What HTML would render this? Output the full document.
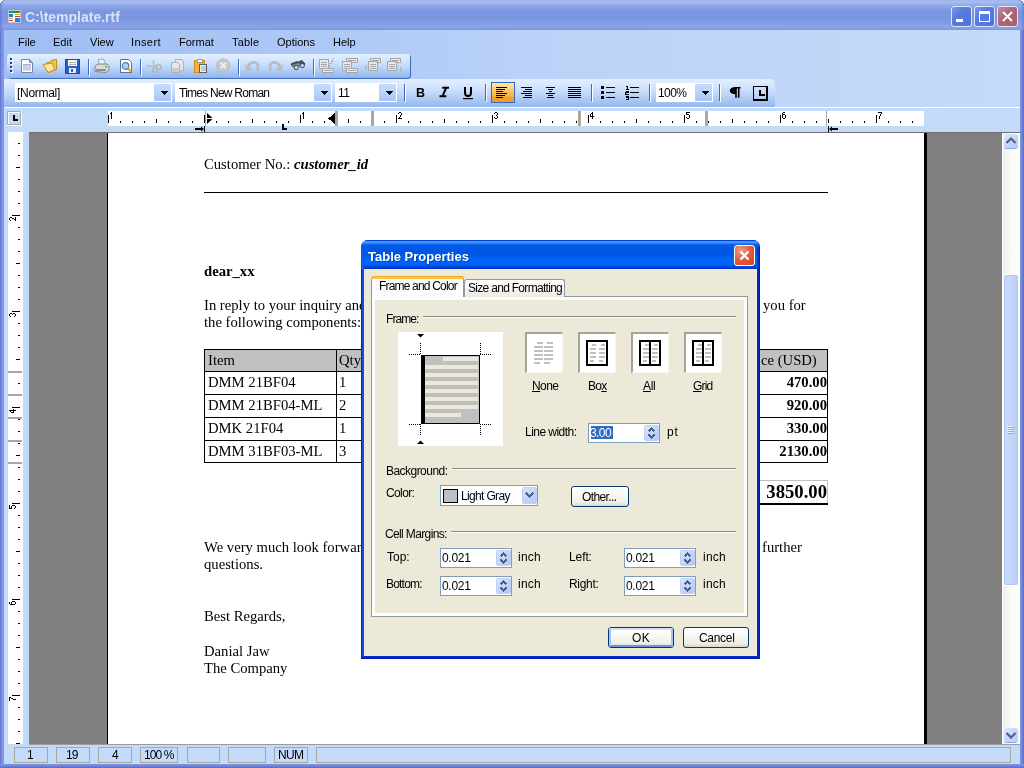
<!DOCTYPE html>
<html><head><meta charset="utf-8">
<style>
*{box-sizing:border-box}
html,body{margin:0;padding:0}
body{width:1024px;height:768px;overflow:hidden;position:relative;font-family:"Liberation Sans",sans-serif;font-size:11px;color:#000;background:#7a8fdd}
.a{position:absolute}
.t{position:absolute;white-space:nowrap;will-change:transform}
svg{position:absolute;overflow:visible}
</style></head><body>
<div class="a" style="left:0px;top:0px;width:1024px;height:768px;background:linear-gradient(90deg,#5a68cc 0,#7389dc 1px,#8298e2 3px,#8298e2 1020px,#6f84da 1022px,#5a68cc 1024px)"></div>
<div class="a" style="left:0px;top:764px;width:1024px;height:4px;background:linear-gradient(180deg,#8298e2,#6f84da 2px,#5a68cc)"></div>
<div class="a" style="left:0px;top:0px;width:1024px;height:30px;border-radius:8px 8px 0 0;background:linear-gradient(180deg,#9fb3ec 0,#a9bdf0 2px,#93abea 5px,#7c97e0 11px,#7a96df 19px,#86a1e6 25px,#8aa4e7 27px,#7d94de 30px)"></div>
<div class="a" style="left:0px;top:0px;width:1024px;height:30px;border-radius:8px 8px 0 0;background:linear-gradient(90deg,#6b7ed8 0,rgba(0,0,0,0) 3px,rgba(0,0,0,0) 1021px,#6b7ed8 1024px)"></div>
<div class="a" style="left:0px;top:0px;width:3px;height:1px;background:#fff"></div>
<div class="a" style="left:0px;top:1px;width:1px;height:2px;background:#fff"></div>
<div class="a" style="left:1021px;top:0px;width:3px;height:1px;background:#fff"></div>
<div class="a" style="left:1023px;top:1px;width:1px;height:2px;background:#fff"></div>
<svg style="left:8px;top:10px" width="13" height="13" viewBox="0 0 13 13" shape-rendering="crispEdges">
<rect x="0" y="0" width="13" height="13" rx="1" fill="#fff"/>
<rect x="0.5" y="0.5" width="12" height="12" rx="1" fill="none" stroke="#b8c4e4"/>
<rect x="1" y="1" width="11" height="2" fill="#1ea01e"/>
<rect x="1" y="4" width="4" height="3" fill="#1e80e8"/>
<rect x="7" y="4" width="5" height="1" fill="#f0a818"/>
<rect x="7" y="6" width="5" height="1" fill="#e03c14"/>
<rect x="1" y="8" width="4" height="1" fill="#f4b820"/>
<rect x="1" y="10" width="4" height="1" fill="#e03c14"/>
<rect x="7" y="8" width="5" height="4" fill="#1e80e8"/>
</svg>
<div class="t " style="left:25.00px;top:8.15px;font-size:14px;line-height:18px;font-family:'Liberation Sans',sans-serif;font-weight:bold;color:#d8e2f8;letter-spacing:0">C:\template.rtf</div>
<div class="a" style="left:951px;top:6px;width:21px;height:21px;border:1px solid #dfe6f8;border-radius:3px;background:linear-gradient(135deg,#7d98ea 0,#5a7de0 35%,#4f71dc 100%)"></div>
<div class="a" style="left:974px;top:6px;width:21px;height:21px;border:1px solid #dfe6f8;border-radius:3px;background:linear-gradient(135deg,#7d98ea 0,#5a7de0 35%,#4f71dc 100%)"></div>
<div class="a" style="left:997px;top:6px;width:21px;height:21px;border:1px solid #dfe6f8;border-radius:3px;background:linear-gradient(135deg,#c48a9a 0,#b06878 40%,#a85a6c 100%)"></div>
<div class="a" style="left:956px;top:19px;width:7px;height:3px;background:#fff"></div>
<div class="a" style="left:979px;top:11px;width:11px;height:11px;border:1px solid #fff;border-top-width:3px"></div>
<svg style="left:1002px;top:11px" width="11" height="11" viewBox="0 0 11 11"><path d="M1 1L10 10M10 1L1 10" stroke="#fff" stroke-width="2"/></svg>
<div class="a" style="left:4px;top:30px;width:1016px;height:734px;background:#c4daf9"></div>
<div class="a" style="left:4px;top:30px;width:1016px;height:78px;background:linear-gradient(90deg,#a0bdf4 0,#aac6f6 25%,#bcd3f8 55%,#c4daf9 100%)"></div>
<div class="t " style="left:18.00px;top:34.69px;font-size:11px;line-height:14px;font-family:'Liberation Sans',sans-serif;letter-spacing:-0.3px;letter-spacing:0px">File</div>
<div class="t " style="left:53.00px;top:34.69px;font-size:11px;line-height:14px;font-family:'Liberation Sans',sans-serif;letter-spacing:-0.3px;letter-spacing:0px">Edit</div>
<div class="t " style="left:90.00px;top:34.69px;font-size:11px;line-height:14px;font-family:'Liberation Sans',sans-serif;letter-spacing:-0.3px;letter-spacing:0px">View</div>
<div class="t " style="left:131.00px;top:34.69px;font-size:11px;line-height:14px;font-family:'Liberation Sans',sans-serif;letter-spacing:-0.3px;letter-spacing:0.4px">Insert</div>
<div class="t " style="left:179.00px;top:34.69px;font-size:11px;line-height:14px;font-family:'Liberation Sans',sans-serif;letter-spacing:-0.3px;letter-spacing:0px">Format</div>
<div class="t " style="left:232.00px;top:34.69px;font-size:11px;line-height:14px;font-family:'Liberation Sans',sans-serif;letter-spacing:-0.3px;letter-spacing:0.2px">Table</div>
<div class="t " style="left:277.00px;top:34.69px;font-size:11px;line-height:14px;font-family:'Liberation Sans',sans-serif;letter-spacing:-0.3px;letter-spacing:0px">Options</div>
<div class="t " style="left:333.00px;top:34.69px;font-size:11px;line-height:14px;font-family:'Liberation Sans',sans-serif;letter-spacing:-0.3px;letter-spacing:0px">Help</div>
<div class="a" style="left:7px;top:54px;width:403px;height:24px;border-radius:3px 3px 4px 4px;background:linear-gradient(180deg,#e3efff 0,#d2e5fd 30%,#b9d4f9 60%,#90b2ea 100%);box-shadow:1px 1px 0 #3f6cb8"></div>
<div class="a" style="left:4px;top:79px;width:771px;height:28px;border-radius:0 5px 5px 0;background:linear-gradient(180deg,#e3efff 0,#d5e6fd 25%,#bdd6f9 55%,#94b6eb 100%);box-shadow:0 1px 0 #6591d2"></div>
<div class="a" style="left:4px;top:107px;width:1016px;height:1px;background:#fff"></div>
<div class="a" style="left:4px;top:132px;width:998px;height:612px;background:#808080"></div>
<div class="a" style="left:4px;top:132px;width:25px;height:612px;background:#c4daf9"></div>
<div class="a" style="left:8px;top:132px;width:15px;height:612px;background:#fff"></div>
<div class="a" style="left:107px;top:133px;width:820px;height:611px;background:#fff;border-left:1px solid #000;border-right:3px solid #000"></div>
<div class="a" style="left:1002px;top:132px;width:18px;height:612px;background:linear-gradient(90deg,#f0f0ea,#fbfbf7 50%,#fdfdfa);border-left:1px solid #fff;border-top:1px solid #fff"></div>
<div class="a" style="left:29px;top:132px;width:991px;height:1px;background:#707070"></div>
<div class="a" style="left:29px;top:744px;width:991px;height:1px;background:#9c9c9c"></div>
<div class="a" style="left:4px;top:745px;width:1016px;height:19px;background:#c4daf9"></div>
<div class="a" style="left:11px;top:59px;width:2px;height:2px;background:#fff"></div>
<div class="a" style="left:10px;top:58px;width:2px;height:2px;background:#1c3c78"></div>
<div class="a" style="left:11px;top:63px;width:2px;height:2px;background:#fff"></div>
<div class="a" style="left:10px;top:62px;width:2px;height:2px;background:#1c3c78"></div>
<div class="a" style="left:11px;top:67px;width:2px;height:2px;background:#fff"></div>
<div class="a" style="left:10px;top:66px;width:2px;height:2px;background:#1c3c78"></div>
<div class="a" style="left:11px;top:71px;width:2px;height:2px;background:#fff"></div>
<div class="a" style="left:10px;top:70px;width:2px;height:2px;background:#1c3c78"></div>
<svg style="left:20px;top:58px" width="14" height="16" viewBox="0 0 14 16"><path d="M1.5 1.5H9.5L12.5 4.5V14.5H1.5Z" fill="#fff" stroke="#7486aa"/><path d="M9.5 1.5V4.5H12.5Z" fill="#c8d0e4" stroke="#7486aa" stroke-linejoin="round"/><rect x="3" y="6" width="8" height="1" fill="#a8b0d4"/><rect x="3" y="7" width="8" height="5.5" fill="#c8cce4"/></svg>
<svg style="left:42px;top:58px" width="16" height="16" viewBox="0 0 16 16"><path d="M4.5 5 L8 4 L9 2.5 L14.5 1.5 V11.5 L6 14.5 Z" fill="#f2c650" stroke="#c88c10" stroke-linejoin="round"/><path d="M1 6.5 L10.5 5 L12.5 12 L6 14.5 Z" fill="#fde69a" stroke="#c88c10" stroke-linejoin="round"/></svg>
<svg style="left:65px;top:58px" width="15" height="16" viewBox="0 0 15 16" shape-rendering="crispEdges"><rect x="0.5" y="1.5" width="14" height="14" fill="#2a5fc8" stroke="#1b4aa8"/><rect x="3" y="2" width="9" height="6" fill="#f4f4ee"/><rect x="4" y="3.5" width="7" height="1" fill="#b0b0b0"/><rect x="4" y="5.5" width="7" height="1" fill="#b0b0b0"/><rect x="4" y="10" width="7" height="5" fill="#e8ecf4"/><rect x="6" y="11" width="2" height="3" fill="#2a5fc8"/></svg>
<div class="a" style="left:88px;top:59px;width:1px;height:16px;background:#3d68c4"></div>
<div class="a" style="left:89px;top:60px;width:1px;height:16px;background:#fff"></div>
<svg style="left:94px;top:58px" width="16" height="16" viewBox="0 0 16 16"><path d="M4 1.5 L9.5 1 L11.5 6 L5.5 7 Z" fill="#e4f0fb" stroke="#8aa0b8" stroke-width="0.8"/><path d="M1 8 L4 6 L13 6 L15 8 L15 12 L12 14.5 L1 13.5 Z" fill="#d8dadc" stroke="#7d7f82" stroke-width="0.9"/><rect x="2" y="11" width="10" height="2" fill="#8c8e90"/><rect x="11.5" y="8" width="1.5" height="1.5" fill="#20b020"/></svg>
<svg style="left:119px;top:58px" width="14" height="16" viewBox="0 0 14 16"><path d="M1.5 1.5H9.5L12.5 4.5V14.5H1.5Z" fill="#fff" stroke="#586ea8"/><circle cx="6.5" cy="8" r="3.3" fill="#a8d8f8" stroke="#5878a0" stroke-width="1.2"/><path d="M9 10.5 L12 13.5" stroke="#f29a20" stroke-width="2.2"/></svg>
<div class="a" style="left:140px;top:59px;width:1px;height:16px;background:#3d68c4"></div>
<div class="a" style="left:141px;top:60px;width:1px;height:16px;background:#fff"></div>
<svg style="left:146px;top:58px" width="16" height="16" viewBox="0 0 16 16"><path d="M1 7.5 L8.5 8.8" stroke="#b8bcc0" stroke-width="1.6"/><path d="M7 2 L8.6 9" stroke="#b8bcc0" stroke-width="1.6"/><circle cx="9" cy="12" r="2.4" fill="none" stroke="#b0b4b8" stroke-width="1.4"/><circle cx="12.5" cy="9" r="2.4" fill="none" stroke="#b0b4b8" stroke-width="1.4"/></svg>
<svg style="left:170px;top:58px" width="15" height="16" viewBox="0 0 15 16" shape-rendering="crispEdges"><path d="M5.5 1.5H11.5L13.5 3.5V12.5H5.5Z" fill="#e4e6e8" stroke="#b0b2b4"/><path d="M1.5 4.5H7.5L9.5 6.5V14.5H1.5Z" fill="#e4e6e8" stroke="#b0b2b4"/><rect x="2" y="10" width="7" height="4" fill="#c8cacc"/></svg>
<svg style="left:193px;top:58px" width="15" height="16" viewBox="0 0 15 16" shape-rendering="crispEdges"><rect x="1.5" y="2.5" width="10" height="12" rx="1" fill="#f4b040" stroke="#d08a18"/><rect x="4" y="1" width="5" height="3" fill="#fff" stroke="#8a8a8a" stroke-width="0.8"/><rect x="6.5" y="6.5" width="7" height="8" fill="#eef0f8" stroke="#606060"/><rect x="7.5" y="8" width="5" height="5" fill="#c0c8e8"/></svg>
<svg style="left:216px;top:58px" width="15" height="15" viewBox="0 0 15 15"><circle cx="7.2" cy="7.5" r="6.6" fill="#c6c8ca" stroke="#b8babc"/><path d="M4.5 4.8 L10 10.2 M10 4.8 L4.5 10.2" stroke="#eceeef" stroke-width="2"/></svg>
<div class="a" style="left:238px;top:59px;width:1px;height:16px;background:#3d68c4"></div>
<div class="a" style="left:239px;top:60px;width:1px;height:16px;background:#fff"></div>
<svg style="left:245px;top:59px" width="15" height="13" viewBox="0 0 15 13"><path d="M4 8 C3 3 12 1 13 7 C13 9 12.5 11 12 12" fill="none" stroke="#b8bcc0" stroke-width="2.6"/><path d="M0.5 4.5 L1 12 L7.5 11 Z" fill="#b8bcc0"/></svg>
<svg style="left:268px;top:59px" width="15" height="13" viewBox="0 0 15 13"><path d="M11 8 C12 3 3 1 2 7 C2 9 2.5 11 3 12" fill="none" stroke="#b8bcc0" stroke-width="2.6"/><path d="M14.5 4.5 L14 12 L7.5 11 Z" fill="#b8bcc0"/></svg>
<svg style="left:290px;top:60px" width="16" height="11" viewBox="0 0 16 11"><path d="M1 4 L7 1.5 L9 4.5 L3 7 Z" fill="#55585c" stroke="#333538" stroke-width="0.9"/><path d="M7 2.5 L12 0.5 L15 4 L9 6 Z" fill="#55585c" stroke="#333538" stroke-width="0.9"/><path d="M2 5 L9 3 L10 6 L4 8Z" fill="#8a8c90"/><circle cx="6.3" cy="7.6" r="2.2" fill="#a8d8f8" stroke="#3a3c40" stroke-width="0.9"/><circle cx="12.2" cy="5.6" r="2.2" fill="#a8d8f8" stroke="#3a3c40" stroke-width="0.9"/></svg>
<div class="a" style="left:313px;top:59px;width:1px;height:16px;background:#3d68c4"></div>
<div class="a" style="left:314px;top:60px;width:1px;height:16px;background:#fff"></div>
<svg style="left:319px;top:58px" width="16" height="15" viewBox="0 0 16 15" shape-rendering="crispEdges"><rect x="0.5" y="1.5" width="9" height="9" fill="#e6e8ea" stroke="#a4a6a8"/><rect x="2" y="4" width="6" height="1" fill="#a4a6a8"/><rect x="2" y="6" width="6" height="1" fill="#a4a6a8"/><rect x="2" y="8" width="6" height="1" fill="#a4a6a8"/><rect x="3.5" y="10.5" width="11" height="4" fill="#e6e8ea" stroke="#a4a6a8"/><rect x="5" y="12" width="8" height="1" fill="#a4a6a8"/><path d="M10 9 L15 0" stroke="#a4a6a8" stroke-dasharray="2,1"/></svg>
<svg style="left:342px;top:58px" width="16" height="15" viewBox="0 0 16 15" shape-rendering="crispEdges"><rect x="4.5" y="0.5" width="11" height="4" fill="#e6e8ea" stroke="#a4a6a8"/><rect x="6" y="2" width="8" height="1" fill="#a4a6a8"/><rect x="0.5" y="3.5" width="9" height="9" fill="#e6e8ea" stroke="#a4a6a8"/><rect x="2" y="6" width="6" height="1" fill="#a4a6a8"/><rect x="2" y="8" width="6" height="1" fill="#a4a6a8"/><rect x="2" y="10" width="6" height="1" fill="#a4a6a8"/><rect x="4.5" y="10.5" width="11" height="4" fill="#e6e8ea" stroke="#a4a6a8"/><rect x="6" y="12" width="8" height="1" fill="#a4a6a8"/></svg>
<svg style="left:364px;top:58px" width="17" height="15" viewBox="0 0 17 15" shape-rendering="crispEdges"><rect x="6.5" y="0.5" width="10" height="4" fill="#e6e8ea" stroke="#a4a6a8"/><rect x="8" y="2" width="7" height="1" fill="#a4a6a8"/><rect x="4.5" y="3.5" width="9" height="9" fill="#e6e8ea" stroke="#a4a6a8"/><rect x="6" y="6" width="6" height="1" fill="#a4a6a8"/><rect x="6" y="8" width="6" height="1" fill="#a4a6a8"/><rect x="6" y="10" width="6" height="1" fill="#a4a6a8"/><path d="M3 6 L0.5 9.5 L3 13Z" fill="#b8babc"/></svg>
<svg style="left:387px;top:58px" width="17" height="15" viewBox="0 0 17 15" shape-rendering="crispEdges"><rect x="3.5" y="0.5" width="10" height="4" fill="#e6e8ea" stroke="#a4a6a8"/><rect x="5" y="2" width="7" height="1" fill="#a4a6a8"/><rect x="0.5" y="3.5" width="9" height="9" fill="#e6e8ea" stroke="#a4a6a8"/><rect x="2" y="6" width="6" height="1" fill="#a4a6a8"/><rect x="2" y="8" width="6" height="1" fill="#a4a6a8"/><rect x="2" y="10" width="6" height="1" fill="#a4a6a8"/><path d="M13 8 L15.5 11.5 L13 15Z" fill="#b8babc"/></svg>
<div class="a" style="left:15px;top:83px;width:157px;height:19px;background:#fff;border:1px solid #fff"></div>
<div class="a" style="left:154px;top:84px;width:17px;height:17px;background:linear-gradient(180deg,#c6dcfd 0,#b9d3fb 50%,#a8c6f5 100%)"></div>
<svg style="left:161px;top:91px" width="7" height="4" viewBox="0 0 7 4" shape-rendering="crispEdges"><rect x="0" y="0" width="7" height="1" fill="#000"/><rect x="1" y="1" width="5" height="1" fill="#000"/><rect x="2" y="2" width="3" height="1" fill="#000"/><rect x="3" y="3" width="1" height="1" fill="#000"/></svg>
<div class="t " style="left:17.00px;top:84.84px;font-size:12px;line-height:16px;font-family:'Liberation Sans',sans-serif;letter-spacing:-0.300px;">[Normal]</div>
<div class="a" style="left:175px;top:83px;width:157px;height:19px;background:#fff;border:1px solid #fff"></div>
<div class="a" style="left:314px;top:84px;width:17px;height:17px;background:linear-gradient(180deg,#c6dcfd 0,#b9d3fb 50%,#a8c6f5 100%)"></div>
<svg style="left:321px;top:91px" width="7" height="4" viewBox="0 0 7 4" shape-rendering="crispEdges"><rect x="0" y="0" width="7" height="1" fill="#000"/><rect x="1" y="1" width="5" height="1" fill="#000"/><rect x="2" y="2" width="3" height="1" fill="#000"/><rect x="3" y="3" width="1" height="1" fill="#000"/></svg>
<div class="t " style="left:178.80px;top:84.84px;font-size:12px;line-height:16px;font-family:'Liberation Sans',sans-serif;letter-spacing:-0.757px;">Times New Roman</div>
<div class="a" style="left:335px;top:83px;width:62px;height:19px;background:#fff;border:1px solid #fff"></div>
<div class="a" style="left:379px;top:84px;width:17px;height:17px;background:linear-gradient(180deg,#c6dcfd 0,#b9d3fb 50%,#a8c6f5 100%)"></div>
<svg style="left:386px;top:91px" width="7" height="4" viewBox="0 0 7 4" shape-rendering="crispEdges"><rect x="0" y="0" width="7" height="1" fill="#000"/><rect x="1" y="1" width="5" height="1" fill="#000"/><rect x="2" y="2" width="3" height="1" fill="#000"/><rect x="3" y="3" width="1" height="1" fill="#000"/></svg>
<div class="t " style="left:338.00px;top:84.84px;font-size:12px;line-height:16px;font-family:'Liberation Sans',sans-serif;letter-spacing:-0.6px;">11</div>
<div class="a" style="left:404px;top:84px;width:1px;height:17px;background:#3d68c4"></div>
<div class="a" style="left:405px;top:85px;width:1px;height:17px;background:#fff"></div>
<div class="t " style="left:415.50px;top:84.67px;font-size:12.5px;line-height:16px;font-family:'Liberation Sans',sans-serif;font-weight:bold">B</div>
<svg style="left:439px;top:87px" width="11" height="10" viewBox="0 0 11 10"><path d="M3.2 0.8H10 M0.5 9.2H7.3 M7.2 0.8 L3.5 9.2" stroke="#000" stroke-width="2" fill="none"/></svg>
<svg style="left:463px;top:87px" width="11" height="12" viewBox="0 0 11 12"><path d="M2 0V5.5C2 8.2 3.2 9 5 9C6.8 9 8 8.2 8 5.5V0" fill="none" stroke="#000" stroke-width="2"/><rect x="0" y="11" width="10" height="1.2" fill="#000"/></svg>
<div class="a" style="left:485px;top:84px;width:1px;height:17px;background:#3d68c4"></div>
<div class="a" style="left:486px;top:85px;width:1px;height:17px;background:#fff"></div>
<div class="a" style="left:491px;top:82px;width:24px;height:21px;border:1px solid #3169c6;background:linear-gradient(180deg,#fde7a8 0,#fbd27c 30%,#f7b856 60%,#f09e2e 80%,#ef9b2a 100%)"></div>
<svg style="left:496px;top:87px" width="11" height="12" viewBox="0 0 11 12" shape-rendering="crispEdges"><rect x="0" y="0" width="11" height="1" fill="#000"/><rect x="0" y="2" width="9" height="1" fill="#000"/><rect x="0" y="4" width="7" height="1" fill="#000"/><rect x="0" y="6" width="11" height="1" fill="#000"/><rect x="0" y="8" width="9" height="1" fill="#000"/><rect x="0" y="10" width="7" height="1" fill="#000"/></svg>
<svg style="left:521px;top:87px" width="11" height="12" viewBox="0 0 11 12" shape-rendering="crispEdges"><rect x="0" y="0" width="11" height="1" fill="#000"/><rect x="4" y="2" width="7" height="1" fill="#000"/><rect x="2" y="4" width="9" height="1" fill="#000"/><rect x="0" y="6" width="11" height="1" fill="#000"/><rect x="4" y="8" width="7" height="1" fill="#000"/><rect x="2" y="10" width="9" height="1" fill="#000"/></svg>
<svg style="left:546px;top:87px" width="9" height="12" viewBox="0 0 9 12" shape-rendering="crispEdges"><rect x="0.0" y="0" width="9" height="1" fill="#000"/><rect x="2.0" y="2" width="5" height="1" fill="#000"/><rect x="3.0" y="4" width="3" height="1" fill="#000"/><rect x="0.0" y="6" width="9" height="1" fill="#000"/><rect x="2.0" y="8" width="5" height="1" fill="#000"/><rect x="1.0" y="10" width="7" height="1" fill="#000"/></svg>
<svg style="left:568px;top:87px" width="13" height="12" viewBox="0 0 13 12" shape-rendering="crispEdges"><rect x="0" y="0" width="13" height="1" fill="#000"/><rect x="0" y="2" width="13" height="1" fill="#000"/><rect x="0" y="4" width="13" height="1" fill="#000"/><rect x="0" y="6" width="13" height="1" fill="#000"/><rect x="0" y="8" width="13" height="1" fill="#000"/><rect x="0" y="10" width="13" height="1" fill="#000"/></svg>
<div class="a" style="left:591px;top:84px;width:1px;height:17px;background:#3d68c4"></div>
<div class="a" style="left:592px;top:85px;width:1px;height:17px;background:#fff"></div>
<svg style="left:601px;top:86px" width="14" height="14" viewBox="0 0 14 14" shape-rendering="crispEdges"><rect x="0" y="0" width="3" height="3" fill="#000"/><rect x="5" y="1" width="9" height="1" fill="#000"/><rect x="0" y="5" width="3" height="3" fill="#000"/><rect x="5" y="6" width="9" height="1" fill="#000"/><rect x="0" y="10" width="3" height="3" fill="#000"/><rect x="5" y="11" width="9" height="1" fill="#000"/></svg>
<svg style="left:625px;top:86px" width="14" height="14" viewBox="0 0 14 14" shape-rendering="crispEdges"><rect x="5" y="1" width="9" height="1" fill="#000"/><rect x="5" y="6" width="9" height="1" fill="#000"/><rect x="5" y="11" width="9" height="1" fill="#000"/><path d="M1 0.5H2.5V3H1M1 3H3.5" stroke="#000" fill="none" stroke-width="1"/><path d="M0.5 5H3V6.5H0.5V8H3.5" stroke="#000" fill="none" stroke-width="1"/><path d="M0.5 10H3V11.5H1M3 11.5V13H0.5" stroke="#000" fill="none" stroke-width="1"/></svg>
<div class="a" style="left:649px;top:84px;width:1px;height:17px;background:#3d68c4"></div>
<div class="a" style="left:650px;top:85px;width:1px;height:17px;background:#fff"></div>
<div class="a" style="left:656px;top:83px;width:57px;height:19px;background:#fff;border:1px solid #fff"></div>
<div class="a" style="left:695px;top:84px;width:17px;height:17px;background:linear-gradient(180deg,#c6dcfd 0,#b9d3fb 50%,#a8c6f5 100%)"></div>
<svg style="left:702px;top:91px" width="7" height="4" viewBox="0 0 7 4" shape-rendering="crispEdges"><rect x="0" y="0" width="7" height="1" fill="#000"/><rect x="1" y="1" width="5" height="1" fill="#000"/><rect x="2" y="2" width="3" height="1" fill="#000"/><rect x="3" y="3" width="1" height="1" fill="#000"/></svg>
<div class="t " style="left:658.00px;top:84.84px;font-size:12px;line-height:16px;font-family:'Liberation Sans',sans-serif;letter-spacing:-0.567px;">100%</div>
<div class="a" style="left:719px;top:84px;width:1px;height:17px;background:#3d68c4"></div>
<div class="a" style="left:720px;top:85px;width:1px;height:17px;background:#fff"></div>
<svg style="left:730px;top:87px" width="11" height="11" viewBox="0 0 11 11"><path d="M6 0.8H10.5M6 0.8V10.8M8.7 0.8V10.8M6 0.8C2 0.8 0.5 2 0.5 3.6C0.5 5.4 2.5 6.4 6 6.4Z" fill="#000" stroke="#000" stroke-width="1.6"/></svg>
<svg style="left:753px;top:86px" width="14" height="14" viewBox="0 0 14 14" shape-rendering="crispEdges"><rect x="0.5" y="0.5" width="13" height="13" fill="none" stroke="#000"/><rect x="0" y="0" width="14" height="14" fill="none" stroke="#000"/><rect x="6" y="4" width="2" height="6" fill="#000"/><rect x="6" y="8" width="6" height="2" fill="#000"/></svg>
<div class="a" style="left:7px;top:111px;width:15px;height:15px;border-right:1px solid #fff;border-bottom:1px solid #fff"></div>
<div class="a" style="left:7px;top:111px;width:14px;height:14px;border:1px solid #aca899;background:#c4daf9;box-shadow:inset 1px 1px 0 #fff"></div>
<div class="a" style="left:13px;top:115px;width:2px;height:6px;background:#000"></div>
<div class="a" style="left:13px;top:119px;width:5px;height:2px;background:#000"></div>
<div class="a" style="left:108px;top:111px;width:816px;height:15px;background:#fff"></div>
<svg style="left:108px;top:111px" width="816" height="15" viewBox="0 0 816 15" shape-rendering="crispEdges"><rect x="0" y="4" width="1" height="8" fill="#000"/><rect x="3" y="1" width="1" height="1" fill="#000"/><rect x="2" y="2" width="1" height="1" fill="#000"/><rect x="3" y="2" width="1" height="1" fill="#000"/><rect x="3" y="3" width="1" height="1" fill="#000"/><rect x="3" y="4" width="1" height="1" fill="#000"/><rect x="3" y="5" width="1" height="1" fill="#000"/><rect x="3" y="6" width="1" height="1" fill="#000"/><rect x="3" y="7" width="1" height="1" fill="#000"/><rect x="12" y="10" width="1" height="2" fill="#000"/><rect x="24" y="10" width="1" height="2" fill="#000"/><rect x="36" y="10" width="1" height="2" fill="#000"/><rect x="48" y="8" width="1" height="4" fill="#000"/><rect x="60" y="10" width="1" height="2" fill="#000"/><rect x="72" y="10" width="1" height="2" fill="#000"/><rect x="84" y="10" width="1" height="2" fill="#000"/><rect x="96" y="4" width="1" height="8" fill="#000"/><rect x="108" y="10" width="1" height="2" fill="#000"/><rect x="120" y="10" width="1" height="2" fill="#000"/><rect x="132" y="10" width="1" height="2" fill="#000"/><rect x="144" y="8" width="1" height="4" fill="#000"/><rect x="156" y="10" width="1" height="2" fill="#000"/><rect x="168" y="10" width="1" height="2" fill="#000"/><rect x="180" y="10" width="1" height="2" fill="#000"/><rect x="192" y="4" width="1" height="8" fill="#000"/><rect x="195" y="1" width="1" height="1" fill="#000"/><rect x="194" y="2" width="1" height="1" fill="#000"/><rect x="195" y="2" width="1" height="1" fill="#000"/><rect x="195" y="3" width="1" height="1" fill="#000"/><rect x="195" y="4" width="1" height="1" fill="#000"/><rect x="195" y="5" width="1" height="1" fill="#000"/><rect x="195" y="6" width="1" height="1" fill="#000"/><rect x="195" y="7" width="1" height="1" fill="#000"/><rect x="204" y="10" width="1" height="2" fill="#000"/><rect x="216" y="10" width="1" height="2" fill="#000"/><rect x="228" y="10" width="1" height="2" fill="#000"/><rect x="240" y="8" width="1" height="4" fill="#000"/><rect x="252" y="10" width="1" height="2" fill="#000"/><rect x="264" y="10" width="1" height="2" fill="#000"/><rect x="276" y="10" width="1" height="2" fill="#000"/><rect x="288" y="4" width="1" height="8" fill="#000"/><rect x="291" y="1" width="1" height="1" fill="#000"/><rect x="292" y="1" width="1" height="1" fill="#000"/><rect x="290" y="2" width="1" height="1" fill="#000"/><rect x="293" y="2" width="1" height="1" fill="#000"/><rect x="293" y="3" width="1" height="1" fill="#000"/><rect x="292" y="4" width="1" height="1" fill="#000"/><rect x="292" y="5" width="1" height="1" fill="#000"/><rect x="291" y="6" width="1" height="1" fill="#000"/><rect x="290" y="7" width="1" height="1" fill="#000"/><rect x="291" y="7" width="1" height="1" fill="#000"/><rect x="292" y="7" width="1" height="1" fill="#000"/><rect x="293" y="7" width="1" height="1" fill="#000"/><rect x="300" y="10" width="1" height="2" fill="#000"/><rect x="312" y="10" width="1" height="2" fill="#000"/><rect x="324" y="10" width="1" height="2" fill="#000"/><rect x="336" y="8" width="1" height="4" fill="#000"/><rect x="348" y="10" width="1" height="2" fill="#000"/><rect x="360" y="10" width="1" height="2" fill="#000"/><rect x="372" y="10" width="1" height="2" fill="#000"/><rect x="384" y="4" width="1" height="8" fill="#000"/><rect x="387" y="1" width="1" height="1" fill="#000"/><rect x="388" y="1" width="1" height="1" fill="#000"/><rect x="386" y="2" width="1" height="1" fill="#000"/><rect x="389" y="2" width="1" height="1" fill="#000"/><rect x="389" y="3" width="1" height="1" fill="#000"/><rect x="388" y="4" width="1" height="1" fill="#000"/><rect x="389" y="5" width="1" height="1" fill="#000"/><rect x="386" y="6" width="1" height="1" fill="#000"/><rect x="389" y="6" width="1" height="1" fill="#000"/><rect x="387" y="7" width="1" height="1" fill="#000"/><rect x="388" y="7" width="1" height="1" fill="#000"/><rect x="396" y="10" width="1" height="2" fill="#000"/><rect x="408" y="10" width="1" height="2" fill="#000"/><rect x="420" y="10" width="1" height="2" fill="#000"/><rect x="432" y="8" width="1" height="4" fill="#000"/><rect x="444" y="10" width="1" height="2" fill="#000"/><rect x="456" y="10" width="1" height="2" fill="#000"/><rect x="468" y="10" width="1" height="2" fill="#000"/><rect x="480" y="4" width="1" height="8" fill="#000"/><rect x="484" y="1" width="1" height="1" fill="#000"/><rect x="483" y="2" width="1" height="1" fill="#000"/><rect x="484" y="2" width="1" height="1" fill="#000"/><rect x="482" y="3" width="1" height="1" fill="#000"/><rect x="484" y="3" width="1" height="1" fill="#000"/><rect x="482" y="4" width="1" height="1" fill="#000"/><rect x="484" y="4" width="1" height="1" fill="#000"/><rect x="482" y="5" width="1" height="1" fill="#000"/><rect x="483" y="5" width="1" height="1" fill="#000"/><rect x="484" y="5" width="1" height="1" fill="#000"/><rect x="485" y="5" width="1" height="1" fill="#000"/><rect x="484" y="6" width="1" height="1" fill="#000"/><rect x="484" y="7" width="1" height="1" fill="#000"/><rect x="492" y="10" width="1" height="2" fill="#000"/><rect x="504" y="10" width="1" height="2" fill="#000"/><rect x="516" y="10" width="1" height="2" fill="#000"/><rect x="528" y="8" width="1" height="4" fill="#000"/><rect x="540" y="10" width="1" height="2" fill="#000"/><rect x="552" y="10" width="1" height="2" fill="#000"/><rect x="564" y="10" width="1" height="2" fill="#000"/><rect x="576" y="4" width="1" height="8" fill="#000"/><rect x="578" y="1" width="1" height="1" fill="#000"/><rect x="579" y="1" width="1" height="1" fill="#000"/><rect x="580" y="1" width="1" height="1" fill="#000"/><rect x="581" y="1" width="1" height="1" fill="#000"/><rect x="578" y="2" width="1" height="1" fill="#000"/><rect x="578" y="3" width="1" height="1" fill="#000"/><rect x="579" y="3" width="1" height="1" fill="#000"/><rect x="580" y="3" width="1" height="1" fill="#000"/><rect x="581" y="4" width="1" height="1" fill="#000"/><rect x="581" y="5" width="1" height="1" fill="#000"/><rect x="578" y="6" width="1" height="1" fill="#000"/><rect x="581" y="6" width="1" height="1" fill="#000"/><rect x="579" y="7" width="1" height="1" fill="#000"/><rect x="580" y="7" width="1" height="1" fill="#000"/><rect x="588" y="10" width="1" height="2" fill="#000"/><rect x="600" y="10" width="1" height="2" fill="#000"/><rect x="612" y="10" width="1" height="2" fill="#000"/><rect x="624" y="8" width="1" height="4" fill="#000"/><rect x="636" y="10" width="1" height="2" fill="#000"/><rect x="648" y="10" width="1" height="2" fill="#000"/><rect x="660" y="10" width="1" height="2" fill="#000"/><rect x="672" y="4" width="1" height="8" fill="#000"/><rect x="675" y="1" width="1" height="1" fill="#000"/><rect x="676" y="1" width="1" height="1" fill="#000"/><rect x="674" y="2" width="1" height="1" fill="#000"/><rect x="674" y="3" width="1" height="1" fill="#000"/><rect x="675" y="3" width="1" height="1" fill="#000"/><rect x="676" y="3" width="1" height="1" fill="#000"/><rect x="674" y="4" width="1" height="1" fill="#000"/><rect x="677" y="4" width="1" height="1" fill="#000"/><rect x="674" y="5" width="1" height="1" fill="#000"/><rect x="677" y="5" width="1" height="1" fill="#000"/><rect x="674" y="6" width="1" height="1" fill="#000"/><rect x="677" y="6" width="1" height="1" fill="#000"/><rect x="675" y="7" width="1" height="1" fill="#000"/><rect x="676" y="7" width="1" height="1" fill="#000"/><rect x="684" y="10" width="1" height="2" fill="#000"/><rect x="696" y="10" width="1" height="2" fill="#000"/><rect x="708" y="10" width="1" height="2" fill="#000"/><rect x="720" y="8" width="1" height="4" fill="#000"/><rect x="732" y="10" width="1" height="2" fill="#000"/><rect x="744" y="10" width="1" height="2" fill="#000"/><rect x="756" y="10" width="1" height="2" fill="#000"/><rect x="768" y="4" width="1" height="8" fill="#000"/><rect x="770" y="1" width="1" height="1" fill="#000"/><rect x="771" y="1" width="1" height="1" fill="#000"/><rect x="772" y="1" width="1" height="1" fill="#000"/><rect x="773" y="1" width="1" height="1" fill="#000"/><rect x="773" y="2" width="1" height="1" fill="#000"/><rect x="772" y="3" width="1" height="1" fill="#000"/><rect x="772" y="4" width="1" height="1" fill="#000"/><rect x="771" y="5" width="1" height="1" fill="#000"/><rect x="771" y="6" width="1" height="1" fill="#000"/><rect x="771" y="7" width="1" height="1" fill="#000"/><rect x="780" y="10" width="1" height="2" fill="#000"/><rect x="792" y="10" width="1" height="2" fill="#000"/><rect x="804" y="10" width="1" height="2" fill="#000"/></svg>
<div class="a" style="left:335px;top:111px;width:3px;height:15px;background:#aca899"></div>
<div class="a" style="left:371px;top:111px;width:3px;height:15px;background:#aca899"></div>
<div class="a" style="left:578px;top:111px;width:3px;height:15px;background:#aca899"></div>
<div class="a" style="left:705px;top:111px;width:3px;height:15px;background:#aca899"></div>
<div class="a" style="left:205px;top:111px;width:1px;height:15px;background:#aca899"></div>
<div class="a" style="left:826px;top:111px;width:1px;height:15px;background:#aca899"></div>
<svg style="left:207px;top:113px" width="6" height="11" viewBox="0 0 6 11"><path d="M0 0L5.5 5L0 5Z" fill="#000"/><path d="M0 6L5.5 6L0 11Z" fill="#000"/></svg>
<svg style="left:328px;top:113px" width="7" height="11" viewBox="0 0 7 11" shape-rendering="crispEdges"><path d="M7 0L0 5.5L7 11Z" fill="#000"/></svg>
<div class="a" style="left:282px;top:124px;width:2px;height:6px;background:#000"></div>
<div class="a" style="left:282px;top:128px;width:5px;height:2px;background:#000"></div>
<svg style="left:195px;top:126px" width="11" height="6" viewBox="0 0 11 6" shape-rendering="crispEdges"><rect x="0" y="2" width="7" height="2" fill="#000"/><path d="M6 0.5L9 3L6 5.5Z" fill="#000" shape-rendering="geometricPrecision"/><rect x="9" y="0" width="1" height="6" fill="#000"/></svg>
<svg style="left:828px;top:126px" width="11" height="6" viewBox="0 0 11 6" shape-rendering="crispEdges"><rect x="0" y="0" width="1" height="6" fill="#000"/><path d="M4 0.5L1 3L4 5.5Z" fill="#000" shape-rendering="geometricPrecision"/><rect x="3" y="2" width="7" height="2" fill="#000"/></svg>
<svg style="left:8px;top:132px" width="14" height="613" viewBox="0 0 14 613" shape-rendering="crispEdges"><rect x="10" y="11" width="2" height="1" fill="#000"/><rect x="10" y="23" width="2" height="1" fill="#000"/><rect x="8" y="35" width="4" height="1" fill="#000"/><rect x="10" y="47" width="2" height="1" fill="#000"/><rect x="10" y="59" width="2" height="1" fill="#000"/><rect x="10" y="71" width="2" height="1" fill="#000"/><rect x="4" y="83" width="8" height="1" fill="#000"/><rect x="1" y="87" width="1" height="1" fill="#000"/><rect x="1" y="86" width="1" height="1" fill="#000"/><rect x="2" y="88" width="1" height="1" fill="#000"/><rect x="2" y="85" width="1" height="1" fill="#000"/><rect x="3" y="85" width="1" height="1" fill="#000"/><rect x="4" y="86" width="1" height="1" fill="#000"/><rect x="5" y="86" width="1" height="1" fill="#000"/><rect x="6" y="87" width="1" height="1" fill="#000"/><rect x="7" y="88" width="1" height="1" fill="#000"/><rect x="7" y="87" width="1" height="1" fill="#000"/><rect x="7" y="86" width="1" height="1" fill="#000"/><rect x="7" y="85" width="1" height="1" fill="#000"/><rect x="10" y="95" width="2" height="1" fill="#000"/><rect x="10" y="107" width="2" height="1" fill="#000"/><rect x="10" y="119" width="2" height="1" fill="#000"/><rect x="8" y="131" width="4" height="1" fill="#000"/><rect x="10" y="143" width="2" height="1" fill="#000"/><rect x="10" y="155" width="2" height="1" fill="#000"/><rect x="10" y="167" width="2" height="1" fill="#000"/><rect x="4" y="179" width="8" height="1" fill="#000"/><rect x="1" y="183" width="1" height="1" fill="#000"/><rect x="1" y="182" width="1" height="1" fill="#000"/><rect x="2" y="184" width="1" height="1" fill="#000"/><rect x="2" y="181" width="1" height="1" fill="#000"/><rect x="3" y="181" width="1" height="1" fill="#000"/><rect x="4" y="182" width="1" height="1" fill="#000"/><rect x="5" y="181" width="1" height="1" fill="#000"/><rect x="6" y="184" width="1" height="1" fill="#000"/><rect x="6" y="181" width="1" height="1" fill="#000"/><rect x="7" y="183" width="1" height="1" fill="#000"/><rect x="7" y="182" width="1" height="1" fill="#000"/><rect x="10" y="191" width="2" height="1" fill="#000"/><rect x="10" y="203" width="2" height="1" fill="#000"/><rect x="10" y="215" width="2" height="1" fill="#000"/><rect x="8" y="227" width="4" height="1" fill="#000"/><rect x="10" y="239" width="2" height="1" fill="#000"/><rect x="10" y="251" width="2" height="1" fill="#000"/><rect x="10" y="263" width="2" height="1" fill="#000"/><rect x="4" y="275" width="8" height="1" fill="#000"/><rect x="1" y="278" width="1" height="1" fill="#000"/><rect x="2" y="279" width="1" height="1" fill="#000"/><rect x="2" y="278" width="1" height="1" fill="#000"/><rect x="3" y="280" width="1" height="1" fill="#000"/><rect x="3" y="278" width="1" height="1" fill="#000"/><rect x="4" y="280" width="1" height="1" fill="#000"/><rect x="4" y="278" width="1" height="1" fill="#000"/><rect x="5" y="280" width="1" height="1" fill="#000"/><rect x="5" y="279" width="1" height="1" fill="#000"/><rect x="5" y="278" width="1" height="1" fill="#000"/><rect x="5" y="277" width="1" height="1" fill="#000"/><rect x="6" y="278" width="1" height="1" fill="#000"/><rect x="7" y="278" width="1" height="1" fill="#000"/><rect x="10" y="287" width="2" height="1" fill="#000"/><rect x="10" y="299" width="2" height="1" fill="#000"/><rect x="10" y="311" width="2" height="1" fill="#000"/><rect x="8" y="323" width="4" height="1" fill="#000"/><rect x="10" y="335" width="2" height="1" fill="#000"/><rect x="10" y="347" width="2" height="1" fill="#000"/><rect x="10" y="359" width="2" height="1" fill="#000"/><rect x="4" y="371" width="8" height="1" fill="#000"/><rect x="1" y="376" width="1" height="1" fill="#000"/><rect x="1" y="375" width="1" height="1" fill="#000"/><rect x="1" y="374" width="1" height="1" fill="#000"/><rect x="1" y="373" width="1" height="1" fill="#000"/><rect x="2" y="376" width="1" height="1" fill="#000"/><rect x="3" y="376" width="1" height="1" fill="#000"/><rect x="3" y="375" width="1" height="1" fill="#000"/><rect x="3" y="374" width="1" height="1" fill="#000"/><rect x="4" y="373" width="1" height="1" fill="#000"/><rect x="5" y="373" width="1" height="1" fill="#000"/><rect x="6" y="376" width="1" height="1" fill="#000"/><rect x="6" y="373" width="1" height="1" fill="#000"/><rect x="7" y="375" width="1" height="1" fill="#000"/><rect x="7" y="374" width="1" height="1" fill="#000"/><rect x="10" y="383" width="2" height="1" fill="#000"/><rect x="10" y="395" width="2" height="1" fill="#000"/><rect x="10" y="407" width="2" height="1" fill="#000"/><rect x="8" y="419" width="4" height="1" fill="#000"/><rect x="10" y="431" width="2" height="1" fill="#000"/><rect x="10" y="443" width="2" height="1" fill="#000"/><rect x="10" y="455" width="2" height="1" fill="#000"/><rect x="4" y="467" width="8" height="1" fill="#000"/><rect x="1" y="471" width="1" height="1" fill="#000"/><rect x="1" y="470" width="1" height="1" fill="#000"/><rect x="2" y="472" width="1" height="1" fill="#000"/><rect x="3" y="472" width="1" height="1" fill="#000"/><rect x="3" y="471" width="1" height="1" fill="#000"/><rect x="3" y="470" width="1" height="1" fill="#000"/><rect x="4" y="472" width="1" height="1" fill="#000"/><rect x="4" y="469" width="1" height="1" fill="#000"/><rect x="5" y="472" width="1" height="1" fill="#000"/><rect x="5" y="469" width="1" height="1" fill="#000"/><rect x="6" y="472" width="1" height="1" fill="#000"/><rect x="6" y="469" width="1" height="1" fill="#000"/><rect x="7" y="471" width="1" height="1" fill="#000"/><rect x="7" y="470" width="1" height="1" fill="#000"/><rect x="10" y="479" width="2" height="1" fill="#000"/><rect x="10" y="491" width="2" height="1" fill="#000"/><rect x="10" y="503" width="2" height="1" fill="#000"/><rect x="8" y="515" width="4" height="1" fill="#000"/><rect x="10" y="527" width="2" height="1" fill="#000"/><rect x="10" y="539" width="2" height="1" fill="#000"/><rect x="10" y="551" width="2" height="1" fill="#000"/><rect x="4" y="563" width="8" height="1" fill="#000"/><rect x="1" y="568" width="1" height="1" fill="#000"/><rect x="1" y="567" width="1" height="1" fill="#000"/><rect x="1" y="566" width="1" height="1" fill="#000"/><rect x="1" y="565" width="1" height="1" fill="#000"/><rect x="2" y="565" width="1" height="1" fill="#000"/><rect x="3" y="566" width="1" height="1" fill="#000"/><rect x="4" y="566" width="1" height="1" fill="#000"/><rect x="5" y="567" width="1" height="1" fill="#000"/><rect x="6" y="567" width="1" height="1" fill="#000"/><rect x="7" y="567" width="1" height="1" fill="#000"/><rect x="10" y="575" width="2" height="1" fill="#000"/><rect x="10" y="587" width="2" height="1" fill="#000"/><rect x="10" y="599" width="2" height="1" fill="#000"/><rect x="8" y="611" width="4" height="1" fill="#000"/><rect x="0" y="239" width="14" height="2" fill="#aca899"/><rect x="0" y="262" width="14" height="2" fill="#aca899"/><rect x="0" y="285" width="14" height="2" fill="#aca899"/><rect x="0" y="308" width="14" height="2" fill="#aca899"/><rect x="0" y="330" width="14" height="2" fill="#aca899"/></svg>
<div class="t " style="left:204.00px;top:154.55px;font-size:14.67px;line-height:19px;font-family:'Liberation Serif',serif;">Customer No.: <b><i>customer_id</i></b></div>
<div class="a" style="left:204px;top:192px;width:624px;height:1px;background:#000"></div>
<div class="t " style="left:204.00px;top:261.55px;font-size:14.67px;line-height:19px;font-family:'Liberation Serif',serif;"><b>dear_xx</b></div>
<div class="t " style="left:204.00px;top:295.55px;font-size:14.67px;line-height:19px;font-family:'Liberation Serif',serif;">In reply to your inquiry and we</div>
<div class="t " style="left:763.00px;top:295.55px;font-size:14.67px;line-height:19px;font-family:'Liberation Serif',serif;">you for</div>
<div class="t " style="left:204.00px;top:312.55px;font-size:14.67px;line-height:19px;font-family:'Liberation Serif',serif;">the following components:</div>
<div class="a" style="left:204px;top:349px;width:624px;height:114px;border:1px solid #000;background:#fff"></div>
<div class="a" style="left:205px;top:350px;width:622px;height:21px;background:#c0c0c0"></div>
<div class="a" style="left:204px;top:371px;width:624px;height:1px;background:#000"></div>
<div class="a" style="left:204px;top:394px;width:624px;height:1px;background:#000"></div>
<div class="a" style="left:204px;top:417px;width:624px;height:1px;background:#000"></div>
<div class="a" style="left:204px;top:440px;width:624px;height:1px;background:#000"></div>
<div class="a" style="left:336px;top:349px;width:1px;height:114px;background:#000"></div>
<div class="a" style="left:600px;top:349px;width:1px;height:114px;background:#000"></div>
<div class="t " style="left:208.00px;top:350.55px;font-size:14.67px;line-height:19px;font-family:'Liberation Serif',serif;">Item</div>
<div class="t " style="left:339.00px;top:350.55px;font-size:14.67px;line-height:19px;font-family:'Liberation Serif',serif;">Qty</div>
<div class="t " style="left:761.00px;top:350.55px;font-size:14.67px;line-height:19px;font-family:'Liberation Serif',serif;">ce (USD)</div>
<div class="t " style="left:208.00px;top:372.55px;font-size:14.67px;line-height:19px;font-family:'Liberation Serif',serif;">DMM 21BF04</div>
<div class="t " style="left:339.00px;top:372.55px;font-size:14.67px;line-height:19px;font-family:'Liberation Serif',serif;">1</div>
<div class="t" style="left:702px;width:125px;text-align:right;top:373.55px;font-size:14.67px;line-height:17px;font-family:'Liberation Serif',serif;font-weight:bold">470.00</div>
<div class="t " style="left:208.00px;top:395.55px;font-size:14.67px;line-height:19px;font-family:'Liberation Serif',serif;">DMM 21BF04-ML</div>
<div class="t " style="left:339.00px;top:395.55px;font-size:14.67px;line-height:19px;font-family:'Liberation Serif',serif;">2</div>
<div class="t" style="left:702px;width:125px;text-align:right;top:396.55px;font-size:14.67px;line-height:17px;font-family:'Liberation Serif',serif;font-weight:bold">920.00</div>
<div class="t " style="left:208.00px;top:418.55px;font-size:14.67px;line-height:19px;font-family:'Liberation Serif',serif;">DMK 21F04</div>
<div class="t " style="left:339.00px;top:418.55px;font-size:14.67px;line-height:19px;font-family:'Liberation Serif',serif;">1</div>
<div class="t" style="left:702px;width:125px;text-align:right;top:419.55px;font-size:14.67px;line-height:17px;font-family:'Liberation Serif',serif;font-weight:bold">330.00</div>
<div class="t " style="left:208.00px;top:441.55px;font-size:14.67px;line-height:19px;font-family:'Liberation Serif',serif;">DMM 31BF03-ML</div>
<div class="t " style="left:339.00px;top:441.55px;font-size:14.67px;line-height:19px;font-family:'Liberation Serif',serif;">3</div>
<div class="t" style="left:702px;width:125px;text-align:right;top:442.55px;font-size:14.67px;line-height:17px;font-family:'Liberation Serif',serif;font-weight:bold">2130.00</div>
<div class="a" style="left:600px;top:480px;width:228px;height:25px;border:1px solid #c0c0c0;border-bottom:none;background:#fff"></div>
<div class="a" style="left:600px;top:503px;width:228px;height:2px;background:#000"></div>
<div class="t" style="left:702px;width:125px;text-align:right;top:480.70px;font-size:18.67px;line-height:22px;font-family:'Liberation Serif',serif;font-weight:bold">3850.00</div>
<div class="t " style="left:204.00px;top:537.55px;font-size:14.67px;line-height:19px;font-family:'Liberation Serif',serif;">We very much look forward</div>
<div class="t " style="left:762.00px;top:537.55px;font-size:14.67px;line-height:19px;font-family:'Liberation Serif',serif;">further</div>
<div class="t " style="left:204.00px;top:554.55px;font-size:14.67px;line-height:19px;font-family:'Liberation Serif',serif;">questions.</div>
<div class="t " style="left:204.00px;top:606.55px;font-size:14.67px;line-height:19px;font-family:'Liberation Serif',serif;">Best Regards,</div>
<div class="t " style="left:204.00px;top:641.55px;font-size:14.67px;line-height:19px;font-family:'Liberation Serif',serif;">Danial Jaw</div>
<div class="t " style="left:204.00px;top:658.55px;font-size:14.67px;line-height:19px;font-family:'Liberation Serif',serif;">The Company</div>
<div class="a" style="left:1004px;top:134px;width:14px;height:14px;border-radius:3px;background:linear-gradient(135deg,#dce8fe 0,#c8d9fc 45%,#b4cbf8 100%);box-shadow:0 1px 0 #86a4e4"></div>
<svg style="left:1004px;top:134px" width="14" height="14" viewBox="0 0 14 14"><path d="M2.5 9L7 4.5L11.5 9" stroke="#4d6185" stroke-width="2.2" fill="none"/></svg>
<div class="a" style="left:1004px;top:728px;width:14px;height:14px;border-radius:3px;background:linear-gradient(135deg,#dce8fe 0,#c8d9fc 45%,#b4cbf8 100%);box-shadow:0 1px 0 #86a4e4"></div>
<svg style="left:1004px;top:728px" width="14" height="14" viewBox="0 0 14 14"><path d="M2.5 5L7 9.5L11.5 5" stroke="#4d6185" stroke-width="2.2" fill="none"/></svg>
<div class="a" style="left:1003px;top:274px;width:16px;height:312px;border:1px solid #fff;border-radius:3px;background:linear-gradient(90deg,#c9d9fc 0,#c6d6fb 40%,#b8cdf8 100%);box-shadow:inset 0 0 0 1px #b0c6f2"></div>
<svg style="left:1007px;top:426px" width="7" height="8" viewBox="0 0 7 8" shape-rendering="crispEdges"><rect x="0" y="0" width="6" height="1" fill="#eef4fe"/><rect x="1" y="1" width="6" height="1" fill="#8caae6"/><rect x="0" y="2" width="6" height="1" fill="#eef4fe"/><rect x="1" y="3" width="6" height="1" fill="#8caae6"/><rect x="0" y="4" width="6" height="1" fill="#eef4fe"/><rect x="1" y="5" width="6" height="1" fill="#8caae6"/><rect x="0" y="6" width="6" height="1" fill="#eef4fe"/><rect x="1" y="7" width="6" height="1" fill="#8caae6"/></svg>
<div class="a" style="left:14px;top:747px;width:34px;height:16px;border:1px solid #aca899;background:#c4daf9"></div>
<div class="a" style="left:56px;top:747px;width:34px;height:16px;border:1px solid #aca899;background:#c4daf9"></div>
<div class="a" style="left:98px;top:747px;width:34px;height:16px;border:1px solid #aca899;background:#c4daf9"></div>
<div class="a" style="left:140px;top:747px;width:38px;height:16px;border:1px solid #aca899;background:#c4daf9"></div>
<div class="a" style="left:187px;top:747px;width:33px;height:16px;border:1px solid #aca899;background:#c4daf9"></div>
<div class="a" style="left:228px;top:747px;width:38px;height:16px;border:1px solid #aca899;background:#c4daf9"></div>
<div class="a" style="left:274px;top:747px;width:34px;height:16px;border:1px solid #aca899;background:#c4daf9"></div>
<div class="a" style="left:316px;top:747px;width:695px;height:16px;border:1px solid #aca899;background:#c4daf9"></div>
<div class="t " style="left:27.00px;top:746.84px;font-size:12px;line-height:16px;font-family:'Liberation Sans',sans-serif;letter-spacing:-0.6px;">1</div>
<div class="t " style="left:66.00px;top:746.84px;font-size:12px;line-height:16px;font-family:'Liberation Sans',sans-serif;letter-spacing:-0.800px;">19</div>
<div class="t " style="left:111.80px;top:746.84px;font-size:12px;line-height:16px;font-family:'Liberation Sans',sans-serif;letter-spacing:0.000px;">4</div>
<div class="t " style="left:144.00px;top:746.84px;font-size:12px;line-height:16px;font-family:'Liberation Sans',sans-serif;letter-spacing:-0.900px;">100 %</div>
<div class="t " style="left:278.00px;top:746.84px;font-size:12px;line-height:16px;font-family:'Liberation Sans',sans-serif;letter-spacing:-0.700px;">NUM</div>
<div class="a" style="left:361px;top:240px;width:399px;height:419px;border-radius:7px 7px 0 0;background:linear-gradient(90deg,#0019cf 0,#0831d9 1px,#166aee 2px,#0831d9 3px,#0831d9 396px,#001ea0 398px,#0019cf 399px)"></div>
<div class="a" style="left:361px;top:240px;width:399px;height:29px;border-radius:7px 7px 0 0;background:linear-gradient(180deg,#0040d8 0,#0040d8 1px,#3d95ff 1px,#3d95ff 3px,#0a6af4 4px,#0058e6 6px,#0055e4 12px,#005ae8 16px,#0064fa 19px,#0066ff 23px,#005cf2 25px,#0044d6 27px,#0030c4 29px)"></div>
<div class="a" style="left:361px;top:247px;width:3px;height:22px;background:linear-gradient(90deg,#0030c8,#1f6af8 1px,#0a52e0 2px)"></div>
<div class="a" style="left:757px;top:247px;width:3px;height:22px;background:linear-gradient(90deg,#0046dc,#0030c0 2px,#0020a8)"></div>
<div class="a" style="left:361px;top:656px;width:399px;height:3px;background:linear-gradient(180deg,#0831d9,#001ea0 2px,#0019cf)"></div>
<div class="a" style="left:364px;top:269px;width:393px;height:387px;background:#ece9d8"></div>
<div class="t " style="left:368.00px;top:248.00px;font-size:13px;line-height:17px;font-family:'Liberation Sans',sans-serif;font-weight:bold;color:#000;opacity:.35;transform:translate(1px,1px)">Table Properties</div>
<div class="t " style="left:368.00px;top:248.00px;font-size:13px;line-height:17px;font-family:'Liberation Sans',sans-serif;font-weight:bold;color:#fff">Table Properties</div>
<div class="a" style="left:734px;top:245px;width:21px;height:21px;border:1px solid #fff;border-radius:3px;background:radial-gradient(circle at 30% 25%,#f0a08a 0,#e35f3c 45%,#d2421e 100%)"></div>
<svg style="left:739px;top:250px" width="11" height="11" viewBox="0 0 11 11"><path d="M1.5 1.5L9.5 9.5M9.5 1.5L1.5 9.5" stroke="#fff" stroke-width="2.2"/></svg>
<div class="a" style="left:371px;top:296px;width:377px;height:321px;border:1px solid #919b9c;border-top-color:#919b9c;background:#fcfcfe"></div>
<div class="a" style="left:375px;top:300px;width:369px;height:313px;background:#ece9d8"></div>
<div class="a" style="left:464px;top:279px;width:101px;height:18px;border:1px solid #919b9c;border-bottom:none;border-radius:3px 3px 0 0;background:linear-gradient(180deg,#fff 0,#f4f3ee 60%,#ebeae3 100%)"></div>
<div class="t " style="left:468.00px;top:279.84px;font-size:12px;line-height:16px;font-family:'Liberation Sans',sans-serif;letter-spacing:-0.700px;">Size and Formatting</div>
<div class="a" style="left:371px;top:276px;width:93px;height:21px;border:1px solid #919b9c;border-bottom:none;border-radius:3px 3px 0 0;background:#fcfcfe"></div>
<div class="a" style="left:371px;top:276px;width:93px;height:3px;border-radius:3px 3px 0 0;background:linear-gradient(180deg,#e68b2c 0,#ffc73c 1px,#ffc73c 3px)"></div>
<div class="a" style="left:372px;top:296px;width:91px;height:1px;background:#fcfcfe"></div>
<div class="t " style="left:379.00px;top:277.84px;font-size:12px;line-height:16px;font-family:'Liberation Sans',sans-serif;letter-spacing:-0.814px;">Frame and Color</div>
<div class="t " style="left:386.00px;top:310.84px;font-size:12px;line-height:16px;font-family:'Liberation Sans',sans-serif;letter-spacing:-0.940px;">Frame:</div>
<div class="a" style="left:423px;top:317px;width:313px;height:1px;background:#fff"></div>
<div class="a" style="left:423px;top:316px;width:313px;height:1px;background:#8a8a84"></div>
<div class="t " style="left:386.00px;top:462.84px;font-size:12px;line-height:16px;font-family:'Liberation Sans',sans-serif;letter-spacing:-0.540px;">Background:</div>
<div class="a" style="left:452px;top:469px;width:284px;height:1px;background:#fff"></div>
<div class="a" style="left:452px;top:468px;width:284px;height:1px;background:#8a8a84"></div>
<div class="t " style="left:385.00px;top:525.84px;font-size:12px;line-height:16px;font-family:'Liberation Sans',sans-serif;letter-spacing:-0.633px;">Cell Margins:</div>
<div class="a" style="left:451px;top:532px;width:285px;height:1px;background:#fff"></div>
<div class="a" style="left:451px;top:531px;width:285px;height:1px;background:#8a8a84"></div>
<div class="a" style="left:398px;top:332px;width:105px;height:114px;background:#fff"></div>
<svg style="left:398px;top:332px" width="105" height="114" viewBox="0 0 105 114" shape-rendering="crispEdges"><rect x="23.5" y="23.5" width="58" height="68" fill="#c0c0c0" stroke="#000"/><rect x="23" y="23" width="4" height="69" fill="#000"/><rect x="45" y="25" width="35" height="4" fill="#ece9d8"/><rect x="27" y="33" width="53" height="4" fill="#ece9d8"/><rect x="27" y="41" width="53" height="4" fill="#ece9d8"/><rect x="27" y="49" width="53" height="4" fill="#ece9d8"/><rect x="27" y="57" width="53" height="4" fill="#ece9d8"/><rect x="27" y="65" width="53" height="4" fill="#ece9d8"/><rect x="27" y="73" width="53" height="4" fill="#ece9d8"/><rect x="27" y="81" width="36" height="4" fill="#ece9d8"/><rect x="11" y="22" width="1" height="1" fill="#000"/><rect x="13" y="22" width="1" height="1" fill="#000"/><rect x="15" y="22" width="1" height="1" fill="#000"/><rect x="17" y="22" width="1" height="1" fill="#000"/><rect x="19" y="22" width="1" height="1" fill="#000"/><rect x="21" y="22" width="1" height="1" fill="#000"/><rect x="22" y="11" width="1" height="1" fill="#000"/><rect x="22" y="13" width="1" height="1" fill="#000"/><rect x="22" y="15" width="1" height="1" fill="#000"/><rect x="22" y="17" width="1" height="1" fill="#000"/><rect x="22" y="19" width="1" height="1" fill="#000"/><rect x="22" y="21" width="1" height="1" fill="#000"/><rect x="82" y="22" width="1" height="1" fill="#000"/><rect x="84" y="22" width="1" height="1" fill="#000"/><rect x="86" y="22" width="1" height="1" fill="#000"/><rect x="88" y="22" width="1" height="1" fill="#000"/><rect x="90" y="22" width="1" height="1" fill="#000"/><rect x="92" y="22" width="1" height="1" fill="#000"/><rect x="82" y="11" width="1" height="1" fill="#000"/><rect x="82" y="13" width="1" height="1" fill="#000"/><rect x="82" y="15" width="1" height="1" fill="#000"/><rect x="82" y="17" width="1" height="1" fill="#000"/><rect x="82" y="19" width="1" height="1" fill="#000"/><rect x="82" y="21" width="1" height="1" fill="#000"/><rect x="11" y="92" width="1" height="1" fill="#000"/><rect x="13" y="92" width="1" height="1" fill="#000"/><rect x="15" y="92" width="1" height="1" fill="#000"/><rect x="17" y="92" width="1" height="1" fill="#000"/><rect x="19" y="92" width="1" height="1" fill="#000"/><rect x="21" y="92" width="1" height="1" fill="#000"/><rect x="22" y="92" width="1" height="1" fill="#000"/><rect x="22" y="94" width="1" height="1" fill="#000"/><rect x="22" y="96" width="1" height="1" fill="#000"/><rect x="22" y="98" width="1" height="1" fill="#000"/><rect x="22" y="100" width="1" height="1" fill="#000"/><rect x="22" y="102" width="1" height="1" fill="#000"/><rect x="82" y="92" width="1" height="1" fill="#000"/><rect x="84" y="92" width="1" height="1" fill="#000"/><rect x="86" y="92" width="1" height="1" fill="#000"/><rect x="88" y="92" width="1" height="1" fill="#000"/><rect x="90" y="92" width="1" height="1" fill="#000"/><rect x="92" y="92" width="1" height="1" fill="#000"/><rect x="82" y="92" width="1" height="1" fill="#000"/><rect x="82" y="94" width="1" height="1" fill="#000"/><rect x="82" y="96" width="1" height="1" fill="#000"/><rect x="82" y="98" width="1" height="1" fill="#000"/><rect x="82" y="100" width="1" height="1" fill="#000"/><rect x="82" y="102" width="1" height="1" fill="#000"/><path d="M19 2H26L22.5 5.5Z" fill="#000" shape-rendering="geometricPrecision"/><path d="M19 112H26L22.5 108.5Z" fill="#000" shape-rendering="geometricPrecision"/></svg>
<div class="a" style="left:525px;top:332px;width:38px;height:41px;background:#fff;border-style:solid;border-width:2px 1px 1px 2px;border-color:#a7a492 #f6f5ef #f6f5ef #a7a492"></div>
<svg style="left:525px;top:332px" width="38" height="41" viewBox="0 0 38 41" shape-rendering="crispEdges"><rect x="12" y="10" width="6" height="2" fill="#c0c0c0"/><rect x="9" y="14" width="9" height="2" fill="#c0c0c0"/><rect x="9" y="18" width="9" height="2" fill="#c0c0c0"/><rect x="9" y="22" width="9" height="2" fill="#c0c0c0"/><rect x="9" y="26" width="9" height="2" fill="#c0c0c0"/><rect x="9" y="30" width="6" height="2" fill="#c0c0c0"/><rect x="22" y="10" width="6" height="2" fill="#c0c0c0"/><rect x="19" y="14" width="9" height="2" fill="#c0c0c0"/><rect x="19" y="18" width="9" height="2" fill="#c0c0c0"/><rect x="19" y="22" width="9" height="2" fill="#c0c0c0"/><rect x="19" y="26" width="9" height="2" fill="#c0c0c0"/><rect x="19" y="30" width="6" height="2" fill="#c0c0c0"/></svg>
<div class="a" style="left:578px;top:332px;width:38px;height:41px;background:#fff;border-style:solid;border-width:2px 1px 1px 2px;border-color:#a7a492 #f6f5ef #f6f5ef #a7a492"></div>
<svg style="left:578px;top:332px" width="38" height="41" viewBox="0 0 38 41" shape-rendering="crispEdges"><rect x="9" y="9" width="20" height="24" fill="none" stroke="#000" stroke-width="2"/><rect x="14" y="12" width="4" height="2" fill="#c0c0c0"/><rect x="23" y="12" width="4" height="2" fill="#c0c0c0"/><rect x="12" y="16" width="6" height="2" fill="#c0c0c0"/><rect x="21" y="16" width="6" height="2" fill="#c0c0c0"/><rect x="12" y="20" width="6" height="2" fill="#c0c0c0"/><rect x="21" y="20" width="6" height="2" fill="#c0c0c0"/><rect x="12" y="24" width="6" height="2" fill="#c0c0c0"/><rect x="21" y="24" width="6" height="2" fill="#c0c0c0"/><rect x="12" y="28" width="4" height="2" fill="#c0c0c0"/><rect x="21" y="28" width="4" height="2" fill="#c0c0c0"/></svg>
<div class="a" style="left:631px;top:332px;width:38px;height:41px;background:#fff;border-style:solid;border-width:2px 1px 1px 2px;border-color:#a7a492 #f6f5ef #f6f5ef #a7a492"></div>
<svg style="left:631px;top:332px" width="38" height="41" viewBox="0 0 38 41" shape-rendering="crispEdges"><rect x="9" y="9" width="20" height="24" fill="none" stroke="#000" stroke-width="2"/><rect x="18" y="9" width="2" height="24" fill="#000"/><rect x="14" y="12" width="4" height="2" fill="#c0c0c0"/><rect x="23" y="12" width="4" height="2" fill="#c0c0c0"/><rect x="12" y="16" width="6" height="2" fill="#c0c0c0"/><rect x="21" y="16" width="6" height="2" fill="#c0c0c0"/><rect x="12" y="20" width="6" height="2" fill="#c0c0c0"/><rect x="21" y="20" width="6" height="2" fill="#c0c0c0"/><rect x="12" y="24" width="6" height="2" fill="#c0c0c0"/><rect x="21" y="24" width="6" height="2" fill="#c0c0c0"/><rect x="12" y="28" width="4" height="2" fill="#c0c0c0"/><rect x="21" y="28" width="4" height="2" fill="#c0c0c0"/></svg>
<div class="a" style="left:684px;top:332px;width:38px;height:41px;background:#fff;border-style:solid;border-width:2px 1px 1px 2px;border-color:#a7a492 #f6f5ef #f6f5ef #a7a492"></div>
<svg style="left:684px;top:332px" width="38" height="41" viewBox="0 0 38 41" shape-rendering="crispEdges"><rect x="9" y="9" width="20" height="24" fill="none" stroke="#000" stroke-width="2"/><rect x="18" y="9" width="2" height="24" fill="#000"/><rect x="14" y="12" width="4" height="2" fill="#c0c0c0"/><rect x="23" y="12" width="4" height="2" fill="#c0c0c0"/><rect x="12" y="16" width="6" height="2" fill="#c0c0c0"/><rect x="21" y="16" width="6" height="2" fill="#c0c0c0"/><rect x="12" y="20" width="6" height="2" fill="#c0c0c0"/><rect x="21" y="20" width="6" height="2" fill="#c0c0c0"/><rect x="12" y="24" width="6" height="2" fill="#c0c0c0"/><rect x="21" y="24" width="6" height="2" fill="#c0c0c0"/><rect x="12" y="28" width="4" height="2" fill="#c0c0c0"/><rect x="21" y="28" width="4" height="2" fill="#c0c0c0"/></svg>
<div class="t " style="left:531.80px;top:377.84px;font-size:12px;line-height:16px;font-family:'Liberation Sans',sans-serif;letter-spacing:-0.567px;"><u>N</u>one</div>
<div class="t " style="left:588.00px;top:377.84px;font-size:12px;line-height:16px;font-family:'Liberation Sans',sans-serif;letter-spacing:-0.700px;">Bo<u>x</u></div>
<div class="t " style="left:642.80px;top:377.84px;font-size:12px;line-height:16px;font-family:'Liberation Sans',sans-serif;letter-spacing:-0.300px;"><u>A</u>ll</div>
<div class="t " style="left:692.80px;top:377.84px;font-size:12px;line-height:16px;font-family:'Liberation Sans',sans-serif;letter-spacing:-0.833px;"><u>G</u>rid</div>
<div class="t " style="left:525.00px;top:423.84px;font-size:12px;line-height:16px;font-family:'Liberation Sans',sans-serif;letter-spacing:-0.540px;">Line width:</div>
<div class="a" style="left:588px;top:423px;width:72px;height:20px;background:#fff;border:1px solid #7f9db9"></div>
<div class="a" style="left:591px;top:426px;width:22px;height:13px;background:#316ac5"></div>
<div class="t " style="left:590.00px;top:424.84px;font-size:12px;line-height:16px;font-family:'Liberation Sans',sans-serif;letter-spacing:-0.6px;color:#fff">3.00</div>
<div class="a" style="left:644px;top:425px;width:15px;height:16px;border-radius:2px;background:linear-gradient(135deg,#d9e6fd 0,#c3d5fb 50%,#b4c8f6 100%);border:1px solid #bfd0f6"></div>
<svg style="left:648px;top:427px" width="7" height="12" viewBox="0 0 7 12" shape-rendering="crispEdges"><path d="M0.5 4.5L3.5 1.5L6.5 4.5M0.5 7.5L3.5 10.5L6.5 7.5" stroke="#4d6185" stroke-width="1.5" fill="none"/></svg>
<div class="t " style="left:667.00px;top:423.84px;font-size:12px;line-height:16px;font-family:'Liberation Sans',sans-serif;letter-spacing:0.800px;">pt</div>
<div class="t " style="left:386.00px;top:484.84px;font-size:12px;line-height:16px;font-family:'Liberation Sans',sans-serif;letter-spacing:-0.620px;">Color:</div>
<div class="a" style="left:440px;top:485px;width:98px;height:21px;background:#fff;border:1px solid #7f9db9"></div>
<div class="a" style="left:443px;top:489px;width:15px;height:14px;background:#c0c0c0;border:1px solid #000"></div>
<div class="t " style="left:461.00px;top:487.84px;font-size:12px;line-height:16px;font-family:'Liberation Sans',sans-serif;letter-spacing:-0.656px;">Light Gray</div>
<div class="a" style="left:522px;top:487px;width:15px;height:17px;border-radius:2px;background:linear-gradient(135deg,#d9e6fd 0,#c3d5fb 50%,#b4c8f6 100%);border:1px solid #bfd0f6"></div>
<svg style="left:525px;top:492px" width="9" height="6" viewBox="0 0 9 6" shape-rendering="crispEdges"><path d="M1 1L4.5 4.5L8 1" stroke="#4d6185" stroke-width="2" fill="none"/></svg>
<div class="a" style="left:571px;top:486px;width:58px;height:21px;border:1px solid #003c74;border-radius:3px;background:linear-gradient(180deg,#fff 0,#f8f8f4 40%,#efeee8 80%,#d8d6cc 100%)"></div>
<div class="t " style="left:582.00px;top:488.84px;font-size:12px;line-height:16px;font-family:'Liberation Sans',sans-serif;letter-spacing:-0.6px;">Other...</div>
<div class="t " style="left:386.80px;top:548.84px;font-size:12px;line-height:16px;font-family:'Liberation Sans',sans-serif;letter-spacing:0.000px;">Top:</div>
<div class="a" style="left:440px;top:548px;width:72px;height:20px;background:#fff;border:1px solid #7f9db9"></div>
<div class="t " style="left:442.20px;top:549.84px;font-size:12px;line-height:16px;font-family:'Liberation Sans',sans-serif;letter-spacing:-0.300px;">0.021</div>
<div class="a" style="left:496px;top:550px;width:15px;height:16px;border-radius:2px;background:linear-gradient(135deg,#d9e6fd 0,#c3d5fb 50%,#b4c8f6 100%);border:1px solid #bfd0f6"></div>
<svg style="left:500px;top:552px" width="7" height="12" viewBox="0 0 7 12" shape-rendering="crispEdges"><path d="M0.5 4.5L3.5 1.5L6.5 4.5M0.5 7.5L3.5 10.5L6.5 7.5" stroke="#4d6185" stroke-width="1.5" fill="none"/></svg>
<div class="t " style="left:518.00px;top:548.84px;font-size:12px;line-height:16px;font-family:'Liberation Sans',sans-serif;letter-spacing:0.233px;">inch</div>
<div class="t " style="left:386.00px;top:575.84px;font-size:12px;line-height:16px;font-family:'Liberation Sans',sans-serif;letter-spacing:-0.800px;">Bottom:</div>
<div class="a" style="left:440px;top:576px;width:72px;height:20px;background:#fff;border:1px solid #7f9db9"></div>
<div class="t " style="left:442.20px;top:577.84px;font-size:12px;line-height:16px;font-family:'Liberation Sans',sans-serif;letter-spacing:-0.300px;">0.021</div>
<div class="a" style="left:496px;top:578px;width:15px;height:16px;border-radius:2px;background:linear-gradient(135deg,#d9e6fd 0,#c3d5fb 50%,#b4c8f6 100%);border:1px solid #bfd0f6"></div>
<svg style="left:500px;top:580px" width="7" height="12" viewBox="0 0 7 12" shape-rendering="crispEdges"><path d="M0.5 4.5L3.5 1.5L6.5 4.5M0.5 7.5L3.5 10.5L6.5 7.5" stroke="#4d6185" stroke-width="1.5" fill="none"/></svg>
<div class="t " style="left:518.00px;top:575.84px;font-size:12px;line-height:16px;font-family:'Liberation Sans',sans-serif;letter-spacing:0.233px;">inch</div>
<div class="t " style="left:569.00px;top:548.84px;font-size:12px;line-height:16px;font-family:'Liberation Sans',sans-serif;letter-spacing:-0.100px;">Left:</div>
<div class="a" style="left:624px;top:548px;width:72px;height:20px;background:#fff;border:1px solid #7f9db9"></div>
<div class="t " style="left:626.20px;top:549.84px;font-size:12px;line-height:16px;font-family:'Liberation Sans',sans-serif;letter-spacing:-0.300px;">0.021</div>
<div class="a" style="left:680px;top:550px;width:15px;height:16px;border-radius:2px;background:linear-gradient(135deg,#d9e6fd 0,#c3d5fb 50%,#b4c8f6 100%);border:1px solid #bfd0f6"></div>
<svg style="left:684px;top:552px" width="7" height="12" viewBox="0 0 7 12" shape-rendering="crispEdges"><path d="M0.5 4.5L3.5 1.5L6.5 4.5M0.5 7.5L3.5 10.5L6.5 7.5" stroke="#4d6185" stroke-width="1.5" fill="none"/></svg>
<div class="t " style="left:703.00px;top:548.84px;font-size:12px;line-height:16px;font-family:'Liberation Sans',sans-serif;letter-spacing:0.233px;">inch</div>
<div class="t " style="left:569.00px;top:575.84px;font-size:12px;line-height:16px;font-family:'Liberation Sans',sans-serif;letter-spacing:-0.300px;">Right:</div>
<div class="a" style="left:624px;top:576px;width:72px;height:20px;background:#fff;border:1px solid #7f9db9"></div>
<div class="t " style="left:626.20px;top:577.84px;font-size:12px;line-height:16px;font-family:'Liberation Sans',sans-serif;letter-spacing:-0.300px;">0.021</div>
<div class="a" style="left:680px;top:578px;width:15px;height:16px;border-radius:2px;background:linear-gradient(135deg,#d9e6fd 0,#c3d5fb 50%,#b4c8f6 100%);border:1px solid #bfd0f6"></div>
<svg style="left:684px;top:580px" width="7" height="12" viewBox="0 0 7 12" shape-rendering="crispEdges"><path d="M0.5 4.5L3.5 1.5L6.5 4.5M0.5 7.5L3.5 10.5L6.5 7.5" stroke="#4d6185" stroke-width="1.5" fill="none"/></svg>
<div class="t " style="left:703.00px;top:575.84px;font-size:12px;line-height:16px;font-family:'Liberation Sans',sans-serif;letter-spacing:0.233px;">inch</div>
<div class="a" style="left:608px;top:627px;width:66px;height:21px;border:1px solid #003c74;border-radius:3px;background:linear-gradient(180deg,#fff 0,#f8f8f4 40%,#efeee8 80%,#d8d6cc 100%)"></div>
<div class="a" style="left:609px;top:628px;width:64px;height:19px;border-radius:2px;border:2px solid #a4c4f4;border-top-color:#cee0fc;border-bottom-color:#6b95e0"></div>
<div class="t " style="left:632.00px;top:629.84px;font-size:12px;line-height:16px;font-family:'Liberation Sans',sans-serif;letter-spacing:0.500px;">OK</div>
<div class="a" style="left:683px;top:627px;width:66px;height:21px;border:1px solid #003c74;border-radius:3px;background:linear-gradient(180deg,#fff 0,#f8f8f4 40%,#efeee8 80%,#d8d6cc 100%)"></div>
<div class="t " style="left:699.00px;top:629.84px;font-size:12px;line-height:16px;font-family:'Liberation Sans',sans-serif;letter-spacing:-0.300px;">Cancel</div>
</body></html>
